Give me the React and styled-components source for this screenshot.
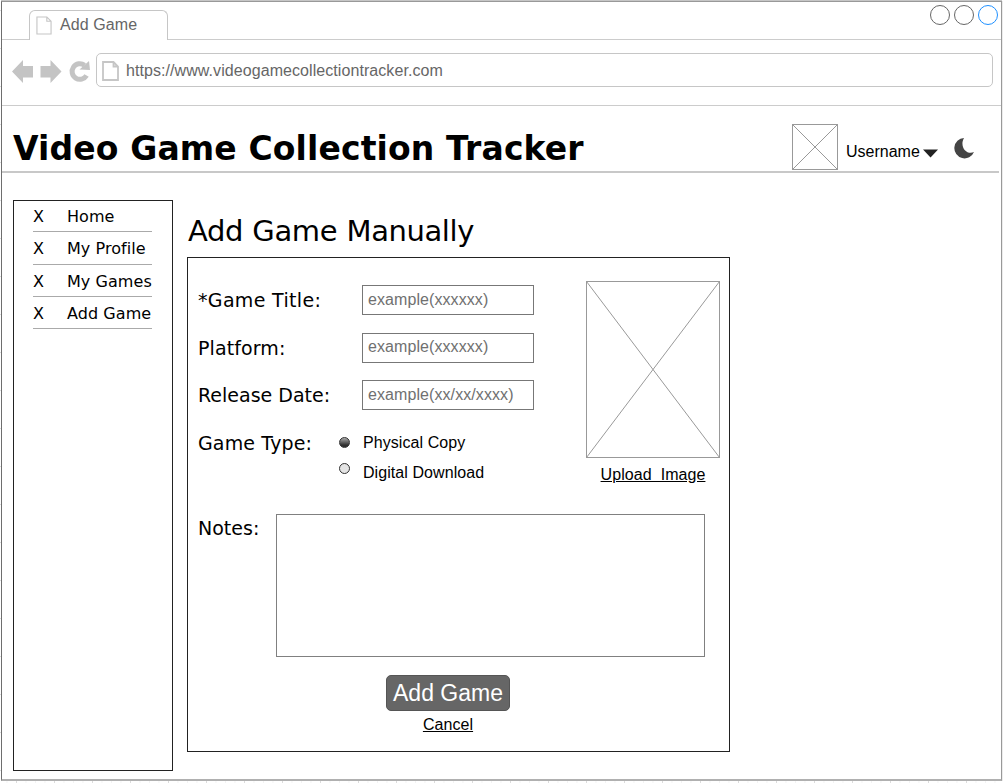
import React from "react";
import styled, { createGlobalStyle } from "styled-components";

const sans = `"Liberation Sans", Arial, sans-serif`;
const wide = `"DejaVu Sans", Verdana, sans-serif`;

const GlobalStyle = createGlobalStyle`
  *, *::before, *::after { box-sizing: border-box; }
  html, body { margin: 0; padding: 0; }
  body {
    width: 1003px;
    height: 783px;
    overflow: hidden;
    color: #000;
    font-family: ${sans};
  }
  button, input, textarea { font-family: inherit; }
`;

const Canvas = styled.div`
  width: 1003px;
  height: 783px;
  padding: 1px;
  background-color: #fff;
  background-image:
    linear-gradient(90deg, #dcdcdc 1px, transparent 1px),
    linear-gradient(#dcdcdc 1px, transparent 1px),
    linear-gradient(90deg, #f3f3f3 1px, transparent 1px);
  background-size: 38px 38px, 38px 38px, 9.5px 9.5px;
  background-position: 16px 0, 0 10px, 6.5px 0;
`;

const BrowserWindow = styled.div`
  width: 1001px;
  height: 780px;
  display: flex;
  flex-direction: column;
  background: #fff;
  border: 1px solid #999;
  border-left-color: #6e6e6e;
  border-bottom: 2px solid #b0b0b0;
  box-shadow: 0 -1px 0 #c6c6c6, 1px 0 0 #ececec;
`;

const TabStrip = styled.div`
  height: 38px;
  flex: none;
  display: flex;
  justify-content: space-between;
  align-items: flex-start;
  padding: 3px 3px 0 27px;
  border-bottom: 1px solid #ccc;
`;

const Tab = styled.div`
  display: flex;
  width: 139px;
  height: 30px;
  margin-top: 5px;
  padding: 5px 0 0 6px;
  gap: 8px;
  background: #fff;
  border: 1px solid #c6c6c6;
  border-bottom: 0;
  border-radius: 6px 6px 0 0;
  color: #666;
  font-size: 16px;
  line-height: 18px;
  letter-spacing: 0.1px;
`;

const WindowButtons = styled.div`
  display: flex;
  gap: 4px;
`;

const Circle = styled.span`
  width: 20px;
  height: 20px;
  border: 1px solid ${(p) => p.$color};
  border-radius: 50%;
`;

const Toolbar = styled.div`
  height: 66px;
  flex: none;
  display: flex;
  padding: 13px 8px 0 10px;
  border-bottom: 1px solid #ccc;
`;

const NavIcons = styled.div`
  display: flex;
  width: 84px;
  padding-top: 7px;
`;

const AddressBar = styled.div`
  flex: 1;
  height: 34px;
  display: flex;
  padding: 7px 0 0 5px;
  gap: 7px;
  border: 1px solid #c6c6c6;
  border-radius: 5px;
  color: #666;
  font-size: 16px;
  line-height: 20px;
  letter-spacing: 0.07px;
`;

const Header = styled.header`
  height: 67px;
  flex: none;
  display: flex;
  margin-right: 2px;
  padding-left: 11px;
  border-bottom: 2px solid #c8c8c8;
`;

const Title = styled.h1`
  flex: 1;
  margin: 0;
  padding-top: 23px;
  font: bold 33px/40px ${wide};
  letter-spacing: 0.13px;
  white-space: nowrap;
`;

const Account = styled.div`
  display: flex;
  width: 207px;
  padding-top: 18px;
`;

const Username = styled.span`
  width: 77px;
  margin-left: 8px;
  padding-top: 19px;
  font-size: 16px;
  line-height: 18px;
`;

const CaretIcon = styled.svg`
  margin-top: 25px;
`;

const MoonIcon = styled.svg`
  margin: 14px 0 0 15px;
`;

const Body = styled.div`
  display: flex;
  align-items: flex-start;
  padding: 27px 0 0 11px;
  gap: 14px;
`;

const Sidebar = styled.nav`
  width: 160px;
  height: 571px;
  padding: 0 20px 0 19px;
  border: 1px solid #222;
`;

const NavItem = styled.a`
  display: flex;
  height: 32.3px;
  padding-top: 7px;
  border-bottom: 1px solid #aaa;
  font: 16px/20px ${wide};
  letter-spacing: 0.06px;
  white-space: nowrap;

  &:first-child { height: 31.3px; padding-top: 5.5px; }
`;

const NavMark = styled.span`
  width: 34px;
`;

const Main = styled.main`
  width: 543px;
`;

const PageTitle = styled.h2`
  height: 57px;
  margin: 0;
  padding: 13px 0 0 1px;
  font: 29px/36px ${wide};
  letter-spacing: -0.4px;
  word-spacing: 0.6px;
  white-space: nowrap;
`;

const Form = styled.div`
  height: 495px;
  padding: 23px 9px 0 10px;
  border: 1px solid #222;
`;

const FormTop = styled.div`
  display: flex;
  justify-content: space-between;
  height: 233px;
`;

const Fields = styled.div`
  width: 336px;
  padding-top: 4px;
`;

const Field = styled.div`
  display: flex;
  height: 47.5px;
  justify-content: space-between;
`;

const Label = styled.label`
  padding-top: ${(p) => (p.$raised ? 2 : 3)}px;
  font: 19px/24px ${wide};
  letter-spacing: ${(p) => p.$track || 0}px;
  white-space: nowrap;
`;

const TextInput = styled.input`
  width: 172px;
  height: 30px;
  margin: 0;
  padding: 0 5px ${(p) => (p.$low ? 0 : 2)}px;
  border: 1px solid #777;
  border-radius: 0;
  outline: 0;
  background: #fff;
  font-size: 16px;
  letter-spacing: 0.08px;
  &::placeholder { color: #707070; opacity: 1; }
`;

const Choices = styled.div`
  width: 195px;
  padding-top: 5px;
`;

const Choice = styled.label`
  display: flex;
  height: 30px;
  gap: 13px;
  padding-top: 1px;
  font-size: 16px;
  line-height: 18px;
  letter-spacing: 0.07px;
  white-space: nowrap;
`;

const Radio = styled.span`
  width: 11px;
  height: 11px;
  margin-top: ${(p) => (p.$on ? 3 : -1)}px;
  border: 1px solid #333;
  border-radius: 50%;
  background: ${(p) => (p.$on ? "linear-gradient(#aaa, #2e2e2e 80%)" : "#e4e4e4")};
`;

const Cover = styled.div`
  width: 134px;
  display: flex;
  flex-direction: column;
  align-items: center;
  gap: 7px;
`;

const TextLink = styled.a`
  font-size: 16px;
  line-height: 20px;
  letter-spacing: 0.06px;
  text-decoration: underline;
  white-space: pre;
`;

const NotesRow = styled.div`
  display: flex;
  justify-content: space-between;
  padding-right: 15px;
`;

const Notes = styled.textarea`
  width: 429px;
  height: 143px;
  margin: 0;
  border: 1px solid #808080;
  border-radius: 0;
  resize: none;
  outline: 0;
  background: #fff;
`;

const Actions = styled.div`
  display: flex;
  flex-direction: column;
  align-items: center;
  width: 124px;
  margin: 18px 0 0 188px;
  gap: 4px;
`;

const Submit = styled.button`
  width: 124px;
  height: 36px;
  padding: 0;
  border: 1px solid #555;
  border-radius: 5px;
  background: #666;
  color: #fff;
  font-size: 23px;
  line-height: 34px;
  white-space: nowrap;
`;

const PageIcon = ({ width, height, stroke }) => (
  <svg width={width} height={height} viewBox="0 0 17 20" preserveAspectRatio="none" fill="none" stroke="#c6c6c6" strokeWidth={stroke}>
    <path d="M1 1H11.5L16 5.5V19H1Z M11.5 1V5.5H16" />
  </svg>
);

const Placeholder = ({ width, height }) => (
  <svg width={width} height={height} fill="none" stroke="#999" style={{ flex: "none" }}>
    <rect x=".5" y=".5" width={width - 1} height={height - 1} />
    <path d={`M.5 .5L${width - 0.5} ${height - 0.5}M${width - 0.5} .5L.5 ${height - 0.5}`} />
  </svg>
);

const pages = ["Home", "My Profile", "My Games", "Add Game"];

const fields = [
  { label: "*Game Title:", hint: "example(xxxxxx)", track: 0.33, low: true },
  { label: "Platform:", hint: "example(xxxxxx)", track: 0.1 },
  { label: "Release Date:", hint: "example(xx/xx/xxxx)", track: 0, low: true },
];

export default function App() {
  return (
    <Canvas>
      <GlobalStyle />
      <BrowserWindow>
        <TabStrip>
          <Tab>
            <PageIcon width={16} height={19} stroke={1.2} />
            Add Game
          </Tab>
          <WindowButtons>
            <Circle $color="#666" />
            <Circle $color="#666" />
            <Circle $color="#1e90ff" />
          </WindowButtons>
        </TabStrip>
        <Toolbar>
          <NavIcons>
            <svg width="80" height="24" fill="#c4c4c4">
              <path d="M0 11.5L11 0V6H21V17.5H11V23Z" />
              <path d="M49.500 11.500L38.500 0V6H28.500V17.500H38.500V23Z" />
              <path d="M74.600 15.500A7.800 7.800 0 1 1 72.500 5.200" fill="none" stroke="#c4c4c4" strokeWidth="5" />
              <path d="M77 1L78 10L67.500 9.500Z" />
            </svg>
          </NavIcons>
          <AddressBar>
            <PageIcon width={17} height={20} stroke={1.8} />
            https://www.videogamecollectiontracker.com
          </AddressBar>
        </Toolbar>
        <Header>
          <Title>Video Game Collection Tracker</Title>
          <Account>
            <Placeholder width={46} height={46} />
            <Username>Username</Username>
            <CaretIcon width="16" height="9" fill="#222">
              <path d="M0 .5H15L7.500 8.500Z" />
            </CaretIcon>
            <MoonIcon width="21" height="21" fill="#444">
              <path d="M10 0A10.200 10.200 0 1 0 20 14C13 17.500 5 9 10 0Z" />
            </MoonIcon>
          </Account>
        </Header>
        <Body>
          <Sidebar>
            {pages.map((page) => (
              <NavItem key={page}>
                <NavMark>X</NavMark>
                {page}
              </NavItem>
            ))}
          </Sidebar>
          <Main>
            <PageTitle>Add Game Manually</PageTitle>
            <Form>
              <FormTop>
                <Fields>
                  {fields.map((f) => (
                    <Field key={f.label}>
                      <Label $track={f.track}>{f.label}</Label>
                      <TextInput placeholder={f.hint} $low={f.low} />
                    </Field>
                  ))}
                  <Field>
                    <Label $track={0.15}>Game Type:</Label>
                    <Choices>
                      <Choice><Radio $on />Physical Copy</Choice>
                      <Choice><Radio />Digital Download</Choice>
                    </Choices>
                  </Field>
                </Fields>
                <Cover>
                  <Placeholder width={134} height={177} />
                  <TextLink>Upload  Image</TextLink>
                </Cover>
              </FormTop>
              <NotesRow>
                <Label $raised>Notes:</Label>
                <Notes />
              </NotesRow>
              <Actions>
                <Submit>Add Game</Submit>
                <TextLink>Cancel</TextLink>
              </Actions>
            </Form>
          </Main>
        </Body>
      </BrowserWindow>
    </Canvas>
  );
}
